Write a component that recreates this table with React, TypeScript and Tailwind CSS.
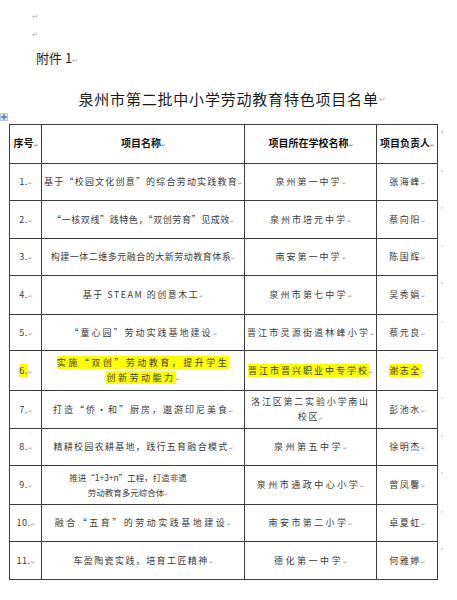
import React from "react";

type Row = {
  n: string;
  name: string[];
  nt: string;
  school: string[];
  st: string;
  person: string;
  h: string;
  hl?: boolean;
};

const rows: Row[] = [
  { n: "1.", name: ["基于“校园文化创意”的综合劳动实践教育"], nt: "tracking-[1.2px]", school: ["泉州第一中学"], st: "tracking-[2px]", person: "张海峰", h: "h-[37px]" },
  { n: "2.", name: ["“一核双线”践特色，“双创劳育”见成效"], nt: "tracking-[0.6px]", school: ["泉州市培元中学"], st: "tracking-[2px]", person: "蔡向阳", h: "h-[38px]" },
  { n: "3.", name: ["构建一体二维多元融合的大新劳动教育体系"], nt: "tracking-[0.5px]", school: ["南安第一中学"], st: "tracking-[2px]", person: "陈国辉", h: "h-[37px]" },
  { n: "4.", name: ["基于 STEAM 的创意木工"], nt: "tracking-[1.5px]", school: ["泉州市第七中学"], st: "tracking-[2.2px]", person: "吴秀娟", h: "h-[39px]" },
  { n: "5.", name: ["“童心园”劳动实践基地建设"], nt: "tracking-[2px]", school: ["晋江市灵源街道林峰小学"], st: "tracking-[2.2px]", person: "蔡元良", h: "h-[36px]" },
  { n: "6.", name: ["实施“双创”劳动教育，提升学生", "创新劳动能力"], nt: "tracking-[2.5px]", school: ["晋江市晋兴职业中专学校"], st: "tracking-[2px]", person: "谢志全", h: "h-[40px]", hl: true },
  { n: "7.", name: ["打造“侨·和”厨房，遨游印尼美食"], nt: "tracking-[2px]", school: ["洛江区第二实验小学南山", "校区"], st: "tracking-[1.8px]", person: "彭池水", h: "h-[38px]" },
  { n: "8.", name: ["精耕校园农耕基地，践行五育融合模式"], nt: "tracking-[1.3px]", school: ["泉州第五中学"], st: "tracking-[2.5px]", person: "徐明杰", h: "h-[37px]" },
  { n: "9.", name: ["推进“1+3+n”工程，打造非遗", "劳动教育多元综合体"], nt: "tracking-[0px]", school: ["泉州市通政中心小学"], st: "tracking-[2.5px]", person: "曾凤馨", h: "h-[39px]" },
  { n: "10.", name: ["融合“五育”的劳动实践基地建设"], nt: "tracking-[2.5px]", school: ["南安市第二小学"], st: "tracking-[2.4px]", person: "卓夏虹", h: "h-[37px]" },
  { n: "11.", name: ["车盈陶瓷实践，培育工匠精神"], nt: "tracking-[1.4px]", school: ["德化第一中学"], st: "tracking-[2.5px]", person: "何雅婷", h: "h-[38px]" },
];

function Mark() {
  return <span className="text-[5px] text-[#999] tracking-normal align-baseline">↵</span>;
}

function Hl({ on, children }: { on?: boolean; children: React.ReactNode }) {
  return on ? <span className="bg-[#ffff00]">{children}</span> : <>{children}</>;
}

const cell = "border border-[#3c3c3c] p-0 text-center align-middle";

export default function App() {
  return (
    <div className="relative w-[457px] h-[600px] bg-white overflow-hidden font-['Noto_Sans_CJK_SC',sans-serif] text-[#333]">
      <div className="pl-[32px] pt-[7px] text-[7px] leading-[18px] text-[#aaa]">
        <div>↵</div>
        <div>↵</div>
      </div>
      <div className="mt-[4px] pl-[36px] text-[13px] leading-[22px] text-[#222]">
        附件 1<span className="text-[7px] text-[#aaa]">↵</span>
      </div>
      <div className="mt-[16px] flex justify-center pl-[8px] text-[15px] leading-[24px] tracking-[0.8px] text-[#1a1a1a]">
        泉州市第二批中小学劳动教育特色项目名单<span className="text-[8px] text-[#aaa] self-end">↵</span>
      </div>
      <div className="mt-[2px] h-[8px]">
        <svg width="8" height="8" viewBox="0 0 8 8">
          <rect x="0.5" y="0.5" width="7" height="7" fill="#eef3fb" stroke="#b8c4d8" strokeWidth="1" />
          <path d="M4 1.5 V6.5 M1.5 4 H6.5" stroke="#2f5fb3" strokeWidth="1" />
          <path d="M3 2.5 L4 1.5 L5 2.5 M3 5.5 L4 6.5 L5 5.5 M2.5 3 L1.5 4 L2.5 5 M5.5 3 L6.5 4 L5.5 5" stroke="#2f5fb3" strokeWidth="0.8" fill="none" />
        </svg>
      </div>
      <table className="mt-[3px] ml-[9px] border-collapse table-fixed w-[444px]">
        <colgroup>
          <col className="w-[32px]" />
          <col className="w-[203px]" />
          <col className="w-[132px]" />
          <col className="w-[61px]" />
          <col className="w-[16px]" />
        </colgroup>
        <thead>
          <tr className="h-[39px] text-[10px] font-bold text-[#111] leading-[14px]">
            <th className={cell}>序号<Mark /></th>
            <th className={cell}>项目名称<Mark /></th>
            <th className={cell}>项目所在学校名称<Mark /></th>
            <th className={cell}>项目负责人<Mark /></th>
            <td className="p-0 align-top pl-[3px] text-[6px] leading-[10px] text-[#999]">,</td>
          </tr>
        </thead>
        <tbody>
          {rows.map((r) => (
            <tr key={r.n} className={`${r.h} text-[9px] leading-[15px] text-[#3a3a3a]`}>
              <td className={`${cell} tracking-[0.5px]`}>
                <Hl on={r.hl}>{r.n}</Hl>
                <Mark />
              </td>
              <td className={`${cell} ${r.nt} ${r.n === "9." ? "text-[8.5px] pr-[30px]" : ""}`}>
                {r.name.map((line, i) => (
                  <div key={i}>
                    <Hl on={r.hl}>{line}</Hl>
                    {i === r.name.length - 1 ? <Mark /> : null}
                  </div>
                ))}
              </td>
              <td className={`${cell} ${r.st}`}>
                {r.school.map((line, i) => (
                  <div key={i}>
                    <Hl on={r.hl}>{line}</Hl>
                    {i === r.school.length - 1 ? <Mark /> : null}
                  </div>
                ))}
              </td>
              <td className={`${cell} tracking-[1.5px]`}>
                <Hl on={r.hl}>{r.person}</Hl>
                <Mark />
              </td>
              <td className="p-0 align-top pl-[3px] text-[6px] leading-[10px] text-[#999]">,</td>
            </tr>
          ))}
        </tbody>
      </table>
    </div>
  );
}
